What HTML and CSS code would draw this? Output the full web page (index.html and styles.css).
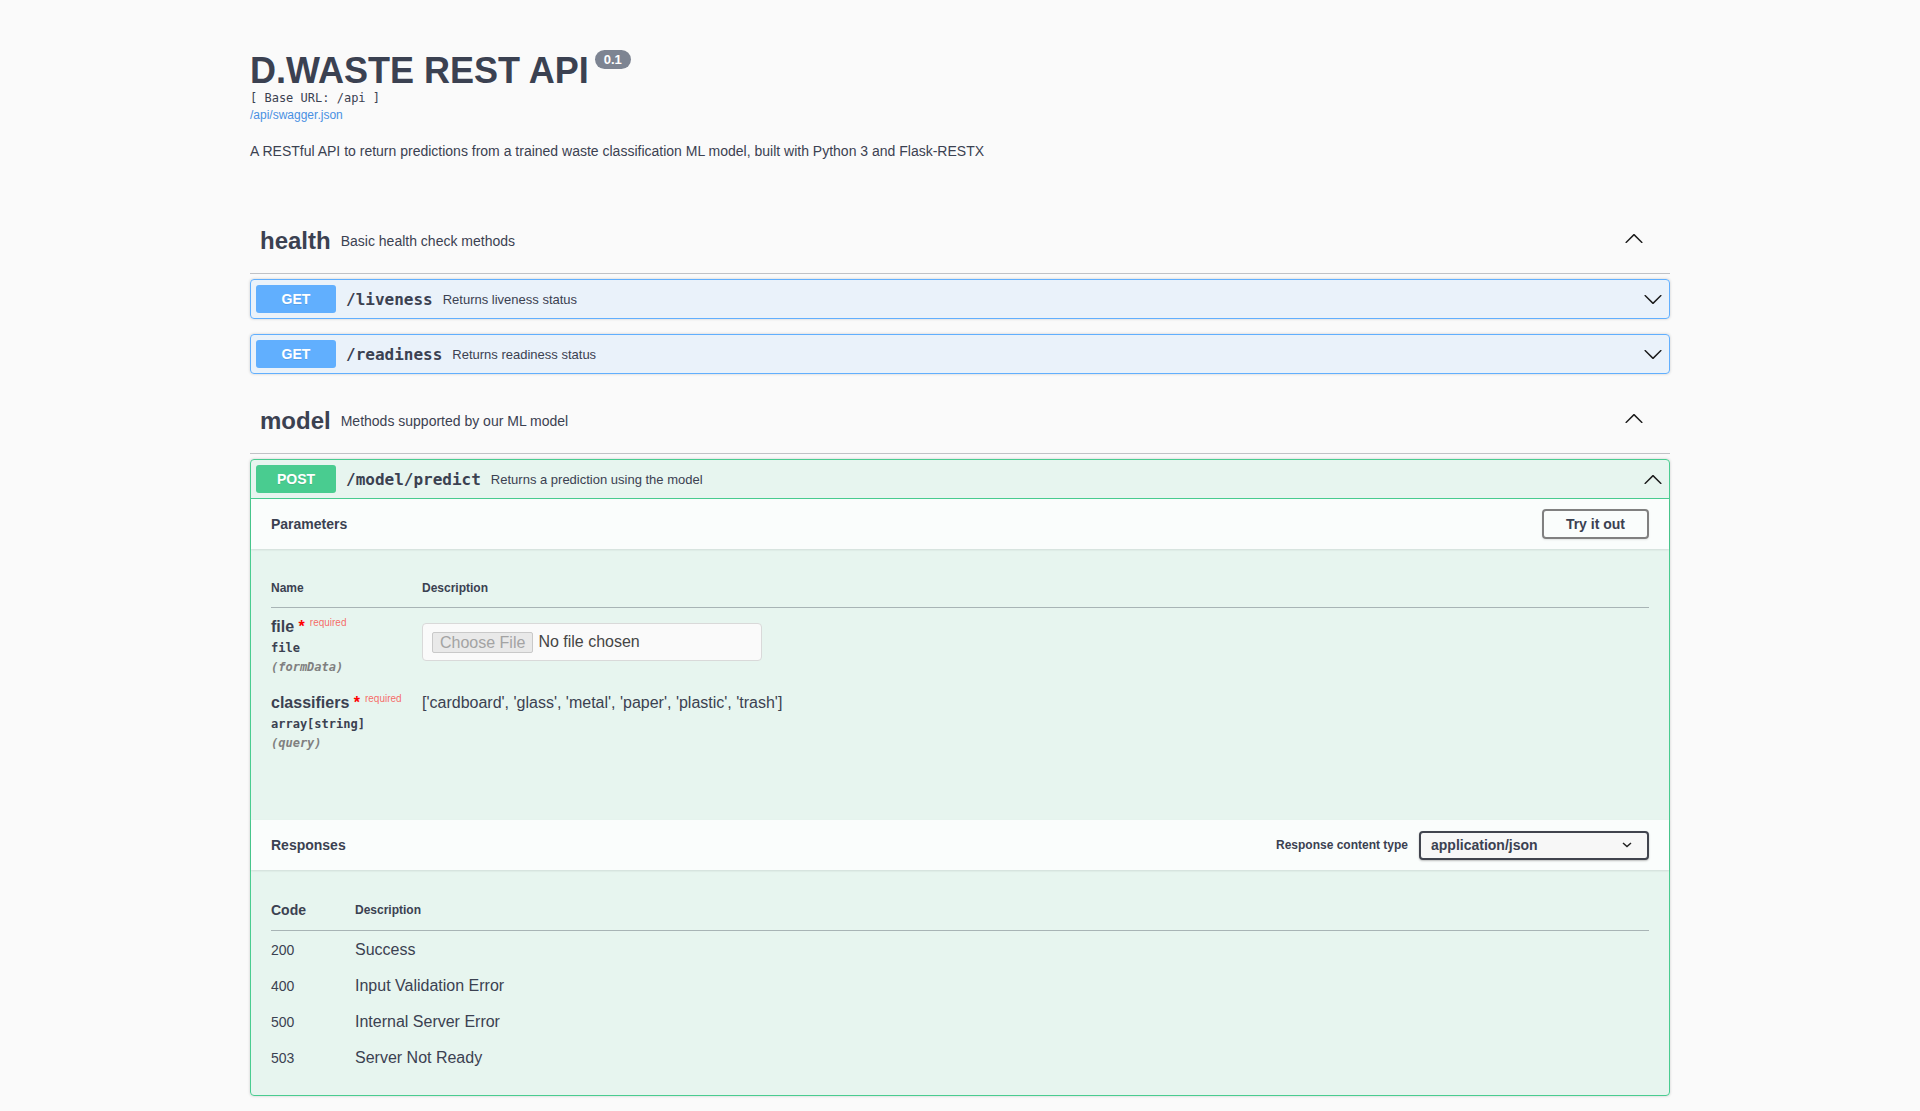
FILE: index.html
```html
<!DOCTYPE html>
<html lang="en">
<head>
<meta charset="utf-8">
<title>D.WASTE REST API</title>
<link rel="stylesheet" href="styles.css">
</head>
<body>
<div class="wrapper">
  <section class="info">
    <div class="main">
      <h2 class="title">D.WASTE REST API<span class="version">0.1</span></h2>
      <pre class="base-url">[ Base URL: /api ]</pre>
      <a class="link" href="#">/api/swagger.json</a>
    </div>
    <p class="description">A RESTful API to return predictions from a trained waste classification ML model, built with Python 3 and Flask-RESTX</p>
  </section>

  <div class="tag-section">
    <h3 class="tag">
      <span class="tag-name">health</span>
      <small class="tag-desc"><p>Basic health check methods</p></small>
      <span class="expand"><svg width="20" height="20" viewBox="0 0 20 20"><path d="M17.418 14.908c.272.268.709.268.979 0s.271-.701 0-.969l-7.908-7.83c-.27-.268-.707-.268-.979 0l-7.908 7.83c-.27.268-.27.701 0 .969.271.268.709.268.979 0L10 7.767l7.418 7.141z"/></svg></span>
    </h3>
    <div class="opblock get">
      <div class="summary">
        <span class="method">GET</span>
        <span class="path">/liveness</span>
        <span class="summary-desc">Returns liveness status</span>
        <span class="op-arrow"><svg width="20" height="20" viewBox="0 0 20 20"><path d="M17.418 6.109c.272-.268.709-.268.979 0s.271.701 0 .969l-7.908 7.83c-.27.268-.707.268-.979 0l-7.908-7.830c-.27-.268-.27-.701 0-.969.271-.268.709-.268.979 0L10 13.25l7.418-7.141z"/></svg></span>
      </div>
    </div>
    <div class="opblock get">
      <div class="summary">
        <span class="method">GET</span>
        <span class="path">/readiness</span>
        <span class="summary-desc">Returns readiness status</span>
        <span class="op-arrow"><svg width="20" height="20" viewBox="0 0 20 20"><path d="M17.418 6.109c.272-.268.709-.268.979 0s.271.701 0 .969l-7.908 7.83c-.27.268-.707.268-.979 0l-7.908-7.830c-.27-.268-.27-.701 0-.969.271-.268.709-.268.979 0L10 13.25l7.418-7.141z"/></svg></span>
      </div>
    </div>
  </div>

  <div class="tag-section">
    <h3 class="tag">
      <span class="tag-name">model</span>
      <small class="tag-desc"><p>Methods supported by our ML model</p></small>
      <span class="expand"><svg width="20" height="20" viewBox="0 0 20 20"><path d="M17.418 14.908c.272.268.709.268.979 0s.271-.701 0-.969l-7.908-7.83c-.27-.268-.707-.268-.979 0l-7.908 7.83c-.27.268-.27.701 0 .969.271.268.709.268.979 0L10 7.767l7.418 7.141z"/></svg></span>
    </h3>
    <div class="opblock post">
      <div class="summary">
        <span class="method">POST</span>
        <span class="path">/model/predict</span>
        <span class="summary-desc">Returns a prediction using the model</span>
        <span class="op-arrow"><svg width="20" height="20" viewBox="0 0 20 20"><path d="M17.418 14.908c.272.268.709.268.979 0s.271-.701 0-.969l-7.908-7.83c-.27-.268-.707-.268-.979 0l-7.908 7.83c-.27.268-.27.701 0 .969.271.268.709.268.979 0L10 7.767l7.418 7.141z"/></svg></span>
      </div>
      <div class="body">
        <div class="section-header">
          <h4>Parameters</h4>
          <button class="btn-try" type="button">Try it out</button>
        </div>
        <div class="table-container">
          <table class="params">
            <thead>
              <tr><th class="col-name">Name</th><th>Description</th></tr>
            </thead>
            <tbody>
              <tr>
                <td class="col-name">
                  <div class="param-name">file<span class="star">&nbsp;*</span><span class="req">required</span></div>
                  <div class="param-type">file</div>
                  <div class="param-in">(formData)</div>
                </td>
                <td>
                  <div class="file-input"><span class="file-btn">Choose File</span><span class="file-text">No file chosen</span></div>
                </td>
              </tr>
              <tr>
                <td class="col-name">
                  <div class="param-name">classifiers<span class="star">&nbsp;*</span><span class="req">required</span></div>
                  <div class="param-type">array[string]</div>
                  <div class="param-in">(query)</div>
                </td>
                <td>
                  <div class="param-desc">['cardboard', 'glass', 'metal', 'paper', 'plastic', 'trash']</div>
                </td>
              </tr>
            </tbody>
          </table>
        </div>
        <div class="execute-wrapper"></div>
        <div class="section-header">
          <h4>Responses</h4>
          <span class="ct-label">Response content type</span>
          <div class="select"><span>application/json</span><svg width="10" height="6" viewBox="0 0 10 6"><path d="M1 1l4 3.5L9 1" fill="none" stroke="#222" stroke-width="1.5"/></svg></div>
        </div>
        <div class="responses-inner">
          <table class="responses">
            <thead>
              <tr><th class="col-code">Code</th><th class="col-rdesc">Description</th></tr>
            </thead>
            <tbody>
              <tr><td class="code">200</td><td class="rdesc">Success</td></tr>
              <tr><td class="code">400</td><td class="rdesc">Input Validation Error</td></tr>
              <tr><td class="code">500</td><td class="rdesc">Internal Server Error</td></tr>
              <tr><td class="code">503</td><td class="rdesc">Server Not Ready</td></tr>
            </tbody>
          </table>
        </div>
      </div>
    </div>
  </div>
</div>
</body>
</html>
```
FILE: styles.css
```css
* { box-sizing: border-box; }

body {
  margin: 0;
  background: #fafafa;
  font-family: "Liberation Sans", Arial, sans-serif;
  color: #3b4151;
}

.wrapper {
  max-width: 1460px;
  margin: 0 auto;
  padding: 0 20px;
}

/* Info */
.info { margin: 50px 0 50px; }

.title {
  margin: 0;
  font-size: 36px;
  line-height: 41px;
  font-weight: 700;
  color: #3b4151;
}

.version {
  display: inline-block;
  vertical-align: top;
  margin-left: 6px;
  padding: 2px 9px;
  border-radius: 57px;
  background: #7d8492;
  color: #fff;
  font-size: 13px;
  line-height: 15px;
  font-weight: 700;
}

.base-url {
  margin: 0;
  font-family: "DejaVu Sans Mono", monospace;
  font-size: 12px;
  line-height: 14px;
  color: #3b4151;
}

.link {
  display: block;
  margin-top: 3px;
  font-size: 12px;
  line-height: 14px;
  color: #4990e2;
  text-decoration: none;
}

.description {
  margin: 21px 0 0;
  font-size: 14px;
  line-height: 16px;
}

/* Tags */
.tag {
  display: flex;
  align-items: center;
  margin: 0 0 5px;
  padding: 10px 20px 10px 10px;
  border-bottom: 1px solid rgba(59, 65, 81, .3);
  font-size: 24px;
  font-weight: 700;
  color: #3b4151;
}

.tag-name { line-height: 28px; }

.tag-desc {
  flex: 1;
  padding: 0 10px;
  font-size: 14px;
  font-weight: 400;
}

.tag-desc p {
  margin: 14px 0;
  line-height: 16px;
}

.expand {
  display: flex;
  padding: 0 6px;
}

.expand svg { transform: translateY(-3px); }

.expand svg, .op-arrow svg { fill: #1b1b1b; }

/* Operation blocks */
.opblock {
  margin: 0 0 15px;
  border: 1px solid #000;
  border-radius: 4px;
  box-shadow: 0 0 3px rgba(0, 0, 0, .19);
}

.get {
  border-color: #61affe;
  background: rgba(97, 175, 254, .1);
}

.post {
  border-color: #49cc90;
  background: rgba(73, 204, 144, .1);
}

.summary {
  display: flex;
  align-items: center;
  padding: 5px;
}

.post .summary { border-bottom: 1px solid #49cc90; }

.method {
  min-width: 80px;
  padding: 6px 15px;
  border-radius: 3px;
  font-size: 14px;
  line-height: 16px;
  font-weight: 700;
  text-align: center;
  color: #fff;
  text-shadow: 0 1px 0 rgba(0, 0, 0, .1);
}

.get .method { background: #61affe; }
.post .method { background: #49cc90; }

.path {
  padding: 0 10px;
  font-family: "DejaVu Sans Mono", monospace;
  font-size: 16px;
  font-weight: 700;
  color: #3b4151;
}

.summary-desc {
  flex: 1;
  font-size: 13px;
  color: #3b4151;
}

.op-arrow {
  display: flex;
  margin-right: 1px;
}

/* Sections */
.section-header {
  display: flex;
  align-items: center;
  min-height: 50px;
  padding: 8px 20px;
  background: rgba(255, 255, 255, .8);
  box-shadow: 0 1px 2px rgba(0, 0, 0, .1);
}

.section-header h4 {
  flex: 1;
  margin: 0;
  font-size: 14px;
  font-weight: 700;
  color: #3b4151;
}

.btn-try {
  padding: 5px 22px;
  border: 2px solid gray;
  border-radius: 4px;
  background: transparent;
  box-shadow: 0 1px 2px rgba(0, 0, 0, .1);
  font-family: "Liberation Sans", Arial, sans-serif;
  font-size: 14px;
  line-height: 16px;
  font-weight: 700;
  color: #3b4151;
}

.table-container { padding: 20px; }

table {
  width: 100%;
  border-collapse: collapse;
}

th {
  padding: 12px 0;
  border-bottom: 1px solid rgba(59, 65, 81, .2);
  font-size: 12px;
  line-height: 14px;
  font-weight: 700;
  text-align: left;
  color: #3b4151;
}

.params .col-name { width: 151px; }

.params td {
  padding: 10px 0;
  vertical-align: top;
}

.param-name {
  height: 18px;
  font-size: 16px;
  line-height: 18px;
  font-weight: 700;
  white-space: nowrap;
}

.star { color: red; }

.req {
  position: relative;
  top: -6px;
  padding: 5px;
  font-size: 10px;
  line-height: 10px;
  font-weight: 400;
  color: rgba(255, 0, 0, .6);
}

.param-type {
  padding: 5px 0;
  font-family: "DejaVu Sans Mono", monospace;
  font-size: 12px;
  line-height: 14px;
  font-weight: 700;
}

.param-in {
  font-family: "DejaVu Sans Mono", monospace;
  font-size: 12px;
  line-height: 14px;
  font-weight: 700;
  font-style: italic;
  color: gray;
}

.file-input {
  display: flex;
  align-items: center;
  width: 340px;
  height: 38px;
  margin: 5px 0;
  padding: 0 9px;
  border: 1px solid #d9d9d9;
  border-radius: 4px;
  background: #fafafa;
  font-size: 16px;
}

.file-btn {
  padding: 0 7px;
  border: 1px solid #c9c9c9;
  border-radius: 2px;
  background: #e9e9e9;
  color: #a3a3a3;
  line-height: 19px;
}

.file-text {
  margin-left: 5px;
  color: #454545;
}

.param-desc {
  font-size: 16px;
  line-height: 18px;
}

.execute-wrapper { padding: 20px; }

.ct-label {
  margin-right: 11px;
  font-size: 12px;
  font-weight: 700;
}

.select {
  display: flex;
  align-items: center;
  justify-content: space-between;
  width: 230px;
  height: 29px;
  padding: 0 15px 0 10px;
  border: 2px solid #41444e;
  border-radius: 4px;
  background: #f7f7f7;
  box-shadow: 0 1px 2px rgba(0, 0, 0, .25);
  font-size: 14px;
  font-weight: 700;
}

.responses-inner { padding: 20px; }

.responses .col-code {
  width: 84px;
  font-size: 14px;
  line-height: 16px;
}

.responses td {
  padding: 10px 0 8px;
  vertical-align: top;
  line-height: 18px;
}

.code { font-size: 14px; }

.rdesc { font-size: 16px; }
```
